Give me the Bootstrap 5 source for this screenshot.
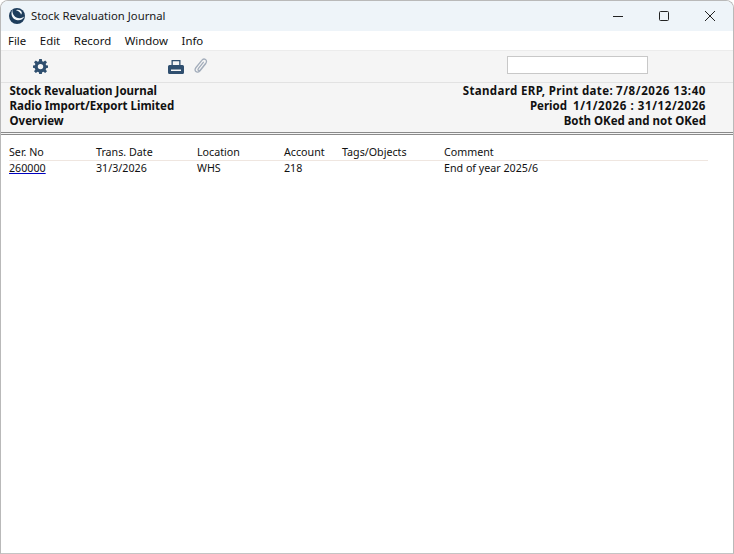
<!DOCTYPE html>
<html lang="en">
<head>
  <meta charset="UTF-8">
  <title>Stock Revaluation Journal</title>
  <link href="https://cdn.jsdelivr.net/npm/bootstrap@5.3.3/dist/css/bootstrap.min.css" rel="stylesheet">
  <style>
    html, body {
      height: 100%;
      background-color: #fff;
    }
    .app-window {
      height: 554px;
      border: 1px solid #b9b9b9;
      border-bottom-color: #c4c4c4;
      border-radius: 8px 8px 0 0;
      overflow: hidden;
      font-family: "Noto Sans", "Liberation Sans", sans-serif;
      font-size: 10.7px;
      color: #111;
    }
    .title-bar {
      height: 30px;
      background-color: #eef4f9;
      padding-left: 8px;
    }
    .title-text {
      font-size: 11.3px;
      margin-left: 6px;
      color: #1a1a1a;
    }
    .win-btn {
      width: 46px;
      height: 30px;
    }
    .menu-bar {
      height: 19px;
      padding-left: 7px;
      gap: 13.6px;
      font-size: 11.4px;
    }
    .tool-bar {
      height: 33px;
      background-color: #f5f5f5;
      border-top: 1px solid #ececec;
      border-bottom: 1px solid #e2e2e2;
    }
    .tool-gear { margin-left: 32px; }
    .tool-print { margin: 1px 0 0 120px; }
    .tool-clip { margin: 0 0 1px 10px; }
    .search-box {
      width: 141px;
      height: 18px;
      margin: 0 0 3px 299px;
      background: #fff;
      border: 1px solid #c8c8c8;
    }
    .report-head {
      height: 49px;
      background-color: #f5f5f5;
      padding: 0 27px 0 8.5px;
      font-weight: 700;
      line-height: 15px;
      font-size: 11.5px;
    }
    .wide-a { letter-spacing: .36px; }
    .wide-b { letter-spacing: .6px; }
    .head-rule {
      height: 3px;
      border-top: 1px solid #8a8a8a;
      border-bottom: 1px solid #8a8a8a;
      background: #f5f5f5;
    }
    .report-list {
      width: 699px;
      margin: 10px 0 0 8px;
      table-layout: fixed;
      border-collapse: collapse;
    }
    .report-list th {
      font-weight: 400;
      line-height: 14px;
      padding: 0 0 1px;
      border-bottom: 1px solid #efe6e0;
    }
    .report-list td {
      line-height: 14px;
      padding: 0;
    }
    .ser-link {
      color: #111;
      text-decoration-color: #0000c0;
    }
  </style>
</head>
<body>
  <div class="app-window d-flex flex-column">
    <div class="title-bar d-flex align-items-center">
      <svg width="16" height="16" viewBox="0 0 16 16">
        <circle cx="8" cy="8" r="8" fill="#1e3d5c"/>
        <path d="M3.500 1.500C2.800 6 6 10.500 11 10.300C12.800 10.200 14.500 9.300 15.500 8C14.500 11.500 10.500 12.800 7.500 12C3.500 11 1 6.500 3.500 1.500Z" fill="#f4f8fb"/>
        <path d="M7 2.200C8.800 1.200 11.500 1.800 12.500 3.800C13 5 12.800 6 12 6.800C12 5 10 3 7 2.200Z" fill="#f4f8fb"/>
      </svg>
      <span class="title-text">Stock Revaluation Journal</span>
      <div class="ms-auto d-flex">
        <div class="win-btn d-flex align-items-center justify-content-center">
          <svg width="10" height="10" viewBox="0 0 10 10"><path d="M0 5.500H10" stroke="#222" fill="none"/></svg>
        </div>
        <div class="win-btn d-flex align-items-center justify-content-center">
          <svg width="10" height="10" viewBox="0 0 10 10"><rect x=".5" y=".5" width="9" height="9" rx="1" stroke="#222" fill="none"/></svg>
        </div>
        <div class="win-btn d-flex align-items-center justify-content-center">
          <svg width="10" height="10" viewBox="0 0 10 10"><path d="M0 0L10 10M10 0L0 10" stroke="#222" fill="none"/></svg>
        </div>
      </div>
    </div>

    <div class="menu-bar d-flex align-items-center">
      <span>File</span><span>Edit</span><span>Record</span><span>Window</span><span>Info</span>
    </div>

    <div class="tool-bar d-flex align-items-center">
      <svg class="tool-gear" width="15" height="15" viewBox="0 0 16 16">
        <path fill="#2f4f6f" fill-rule="evenodd" d="M6.600 0H9.400L9.800 2.300L11.100 2.900L13 1.500L14.900 3.400L13.500 5.300L14 6.600L16 7V9.400L14 9.800L13.500 11.100L14.900 13L13 14.900L11.100 13.500L9.800 14L9.400 16H6.600L6.200 14L4.900 13.500L3 14.900L1.100 13L2.500 11.100L2 9.800L0 9.400V7L2 6.600L2.500 5.300L1.100 3.400L3 1.500L4.900 2.900L6.200 2.300ZM8 5.200A2.900 2.900 0 1 0 8 11A2.900 2.900 0 1 0 8 5.200Z"/>
      </svg>
      <svg class="tool-print" width="16" height="14" viewBox="0 0 16 14">
        <path fill="#2f4f6f" fill-rule="evenodd" d="M3.500 0H12.500V5H3.500ZM4.800 1.200V5H11.200V1.200ZM1.500 5H14.500Q16 5 16 6.500V12.500Q16 14 14.500 14H1.500Q0 14 0 12.500V6.500Q0 5 1.500 5ZM3 9.500V11H13V9.500Z"/>
      </svg>
      <svg class="tool-clip" width="14" height="16" viewBox="0 0 14 16">
        <path fill="none" stroke="#a3adbb" stroke-width="1.300" stroke-linecap="round" d="M11.800 5.500L6 12.800C4.800 14.300 3 14.600 1.900 13.600C.8 12.600 .9 11 2 9.500L7.800 2.300C8.800 1 10.300 .7 11.500 1.500C12.700 2.400 12.800 3.900 11.800 5.200L6.400 11.900C5.800 12.700 5 12.900 4.400 12.400C3.800 11.900 3.900 11.100 4.500 10.300L9.300 4.300"/>
      </svg>
      <div class="search-box"></div>
    </div>

    <div class="report-head d-flex justify-content-between">
      <div>
        <div>Stock Revaluation Journal</div>
        <div>Radio Import/Export Limited</div>
        <div>Overview</div>
      </div>
      <div class="text-end">
        <div><span class="wide-a">Standard ERP, Print date:</span> <span class="wide-b">7/8/2026 13:40</span></div>
        <div>Period&nbsp; <span class="wide-b">1/1/2026 : 31/12/2026</span></div>
        <div>Both OKed and not OKed</div>
      </div>
    </div>
    <div class="head-rule"></div>

    <table class="report-list">
      <colgroup>
        <col style="width:87px"><col style="width:101px"><col style="width:87px"><col style="width:58px"><col style="width:102px"><col>
      </colgroup>
      <thead>
        <tr><th>Ser. No</th><th>Trans. Date</th><th>Location</th><th>Account</th><th>Tags/Objects</th><th>Comment</th></tr>
      </thead>
      <tbody>
        <tr><td><a class="ser-link" href="#">260000</a></td><td>31/3/2026</td><td>WHS</td><td>218</td><td></td><td>End of year 2025/6</td></tr>
      </tbody>
    </table>
  </div>
  <script src="https://cdn.jsdelivr.net/npm/bootstrap@5.3.3/dist/js/bootstrap.bundle.min.js"></script>
</body>
</html>
